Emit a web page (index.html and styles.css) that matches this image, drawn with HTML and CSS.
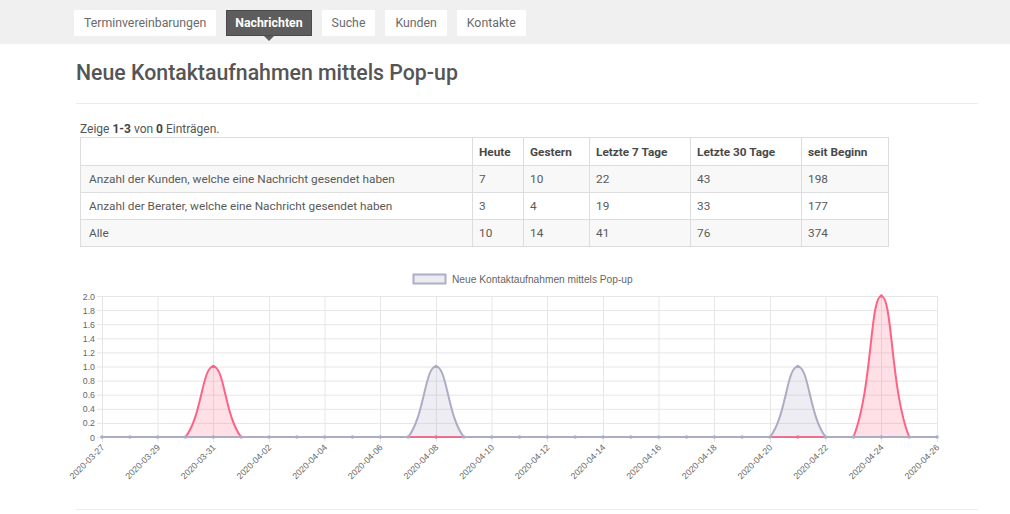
FILE: index.html
```html
<!DOCTYPE html>
<html lang="de">
<head>
<meta charset="utf-8">
<title>Neue Kontaktaufnahmen mittels Pop-up</title>
<link rel="stylesheet" href="styles.css">
</head>
<body>
<nav class="topnav">
  <ul class="tabs">
    <li class="tab">Terminvereinbarungen</li>
    <li class="tab active">Nachrichten</li>
    <li class="tab">Suche</li>
    <li class="tab">Kunden</li>
    <li class="tab">Kontakte</li>
  </ul>
</nav>
<main class="page">
  <h1 class="title">Neue Kontaktaufnahmen mittels Pop-up</h1>
  <hr class="rule">
  <div class="content">
    <div class="summary">Zeige <b>1-3</b> von <b>0</b> Einträgen.</div>
    <table class="stats">
      <colgroup>
        <col class="c1"><col class="c2"><col class="c3"><col class="c4"><col class="c5"><col class="c6">
      </colgroup>
      <thead>
        <tr><th></th><th>Heute</th><th>Gestern</th><th>Letzte 7 Tage</th><th>Letzte 30 Tage</th><th>seit Beginn</th></tr>
      </thead>
      <tbody>
        <tr><td>Anzahl der Kunden, welche eine Nachricht gesendet haben</td><td>7</td><td>10</td><td>22</td><td>43</td><td>198</td></tr>
        <tr><td>Anzahl der Berater, welche eine Nachricht gesendet haben</td><td>3</td><td>4</td><td>19</td><td>33</td><td>177</td></tr>
        <tr><td>Alle</td><td>10</td><td>14</td><td>41</td><td>76</td><td>374</td></tr>
      </tbody>
    </table>
  </div>
  <svg class="chart" width="902" height="247" viewBox="0 0 902 247" xmlns="http://www.w3.org/2000/svg">
    <g transform="translate(-76,-262)">
      <!-- legend -->
      <rect class="legbox" x="413.5" y="274.5" width="32" height="9"/>
      <text class="legtext" x="452" y="283">Neue Kontaktaufnahmen mittels Pop-up</text>

      <!-- horizontal grid -->
      <g class="grid">
        <line x1="97" y1="296.5" x2="937" y2="296.5"/>
        <line x1="97" y1="310.6" x2="937" y2="310.6"/>
        <line x1="97" y1="324.7" x2="937" y2="324.7"/>
        <line x1="97" y1="338.8" x2="937" y2="338.8"/>
        <line x1="97" y1="352.9" x2="937" y2="352.9"/>
        <line x1="97" y1="367" x2="937" y2="367"/>
        <line x1="97" y1="381.1" x2="937" y2="381.1"/>
        <line x1="97" y1="395.2" x2="937" y2="395.2"/>
        <line x1="97" y1="409.3" x2="937" y2="409.3"/>
        <line x1="97" y1="423.4" x2="937" y2="423.4"/>
        <line x1="97" y1="437.5" x2="937" y2="437.5"/>
      </g>
      <!-- vertical grid -->
      <g class="grid">
        <line x1="102.5" y1="296" x2="102.5" y2="442"/>
        <line x1="158" y1="296" x2="158" y2="442"/>
        <line x1="213.5" y1="296" x2="213.5" y2="442"/>
        <line x1="269.5" y1="296" x2="269.5" y2="442"/>
        <line x1="325" y1="296" x2="325" y2="442"/>
        <line x1="380.5" y1="296" x2="380.5" y2="442"/>
        <line x1="436.5" y1="296" x2="436.5" y2="442"/>
        <line x1="492" y1="296" x2="492" y2="442"/>
        <line x1="547.5" y1="296" x2="547.5" y2="442"/>
        <line x1="603.5" y1="296" x2="603.5" y2="442"/>
        <line x1="659" y1="296" x2="659" y2="442"/>
        <line x1="714.5" y1="296" x2="714.5" y2="442"/>
        <line x1="770.5" y1="296" x2="770.5" y2="442"/>
        <line x1="826" y1="296" x2="826" y2="442"/>
        <line x1="881.5" y1="296" x2="881.5" y2="442"/>
        <line x1="937.5" y1="296" x2="937.5" y2="442"/>
      </g>

      <!-- y labels -->
      <g class="ylab">
        <text x="95" y="299.5">2.0</text>
        <text x="95" y="313.6">1.8</text>
        <text x="95" y="327.7">1.6</text>
        <text x="95" y="341.8">1.4</text>
        <text x="95" y="355.9">1.2</text>
        <text x="95" y="370">1.0</text>
        <text x="95" y="384.1">0.8</text>
        <text x="95" y="398.2">0.6</text>
        <text x="95" y="412.3">0.4</text>
        <text x="95" y="426.4">0.2</text>
        <text x="95" y="440.5">0</text>
      </g>

      <!-- x labels -->
      <g class="xlab">
        <text transform="translate(105,448) rotate(-45)">2020-03-27</text>
        <text transform="translate(160.7,448) rotate(-45)">2020-03-29</text>
        <text transform="translate(216.3,448) rotate(-45)">2020-03-31</text>
        <text transform="translate(272,448) rotate(-45)">2020-04-02</text>
        <text transform="translate(327.7,448) rotate(-45)">2020-04-04</text>
        <text transform="translate(383.3,448) rotate(-45)">2020-04-06</text>
        <text transform="translate(439,448) rotate(-45)">2020-04-08</text>
        <text transform="translate(494.7,448) rotate(-45)">2020-04-10</text>
        <text transform="translate(550.3,448) rotate(-45)">2020-04-12</text>
        <text transform="translate(606,448) rotate(-45)">2020-04-14</text>
        <text transform="translate(661.7,448) rotate(-45)">2020-04-16</text>
        <text transform="translate(717.3,448) rotate(-45)">2020-04-18</text>
        <text transform="translate(773,448) rotate(-45)">2020-04-20</text>
        <text transform="translate(828.7,448) rotate(-45)">2020-04-22</text>
        <text transform="translate(884.3,448) rotate(-45)">2020-04-24</text>
        <text transform="translate(940,448) rotate(-45)">2020-04-26</text>
      </g>

      <!-- red series -->
      <path class="redfill" d="M185.5 437 C201.8 416.4 202.2 366.5 213.33 366.5 C224.46 366.5 224.87 416.4 241.17 437 Z"/>
      <path class="redfill" d="M853.5 437 C872.15 389.7 870.2 296 881.33 296 C892.46 296 890.52 389.7 909.17 437 Z"/>
      <path class="redline" d="M102 437 L185.5 437 C201.8 416.4 202.2 366.5 213.33 366.5 C224.46 366.5 224.87 416.4 241.17 437 L853.5 437 C872.15 389.7 870.2 296 881.33 296 C892.46 296 890.52 389.7 909.17 437 L937 437"/>
      <g class="redpt">
        <circle cx="213.33" cy="366.5" r="1.8"/>
        <circle cx="881.33" cy="296" r="1.8"/>
        <circle cx="436" cy="437" r="1.8"/>
        <circle cx="797.83" cy="437" r="1.8"/>
      </g>

      <!-- gray series -->
      <path class="grayfill" d="M408.17 437 C424.47 416.4 424.87 366.5 436 366.5 C447.13 366.5 447.53 416.4 463.83 437 Z"/>
      <path class="grayfill" d="M770 437 C786.3 416.4 786.7 366.5 797.83 366.5 C808.96 366.5 809.37 416.4 825.67 437 Z"/>
      <path class="grayline" d="M102 437 L408.17 437 C424.47 416.4 424.87 366.5 436 366.5 C447.13 366.5 447.53 416.4 463.83 437"/>
      <path class="grayline" d="M770 437 L463.83 437"/>
      <path class="grayline" d="M770 437 C786.3 416.4 786.7 366.5 797.83 366.5 C808.96 366.5 809.37 416.4 825.67 437 L853.5 437"/>
      <path class="grayline" d="M853.5 437 L937 437"/>
      <g class="graypt">
        <circle cx="102" cy="437" r="1.8"/>
        <circle cx="129.83" cy="437" r="1.8"/>
        <circle cx="157.67" cy="437" r="1.8"/>
        <circle cx="185.5" cy="437" r="1.8"/>
        <circle cx="213.33" cy="437" r="1.8"/>
        <circle cx="241.17" cy="437" r="1.8"/>
        <circle cx="269" cy="437" r="1.8"/>
        <circle cx="296.83" cy="437" r="1.8"/>
        <circle cx="324.67" cy="437" r="1.8"/>
        <circle cx="352.5" cy="437" r="1.8"/>
        <circle cx="380.33" cy="437" r="1.8"/>
        <circle cx="408.17" cy="437" r="1.8"/>
        <circle cx="436" cy="366.5" r="1.8"/>
        <circle cx="463.83" cy="437" r="1.8"/>
        <circle cx="491.67" cy="437" r="1.8"/>
        <circle cx="519.5" cy="437" r="1.8"/>
        <circle cx="547.33" cy="437" r="1.8"/>
        <circle cx="575.17" cy="437" r="1.8"/>
        <circle cx="603" cy="437" r="1.8"/>
        <circle cx="630.83" cy="437" r="1.8"/>
        <circle cx="658.67" cy="437" r="1.8"/>
        <circle cx="686.5" cy="437" r="1.8"/>
        <circle cx="714.33" cy="437" r="1.8"/>
        <circle cx="742.17" cy="437" r="1.8"/>
        <circle cx="770" cy="437" r="1.8"/>
        <circle cx="797.83" cy="366.5" r="1.8"/>
        <circle cx="825.67" cy="437" r="1.8"/>
        <circle cx="853.5" cy="437" r="1.8"/>
        <circle cx="881.33" cy="437" r="1.8"/>
        <circle cx="909.17" cy="437" r="1.8"/>
        <circle cx="937" cy="437" r="1.8"/>
      </g>
    </g>
  </svg>
  <hr class="rule bottom">
</main>
</body>
</html>
```
FILE: styles.css
```css
html, body {
  margin: 0;
  padding: 0;
  background: #ffffff;
}
body {
  font-family: Roboto, "Liberation Sans", Arial, sans-serif;
  color: #555555;
}
.topnav {
  background: #f0f0f0;
  height: 44px;
  box-sizing: border-box;
  padding-top: 10px;
}
.tabs {
  list-style: none;
  margin: 0 0 0 74px;
  padding: 0;
  display: flex;
  gap: 10px;
}
.tab {
  position: relative;
  height: 26px;
  box-sizing: border-box;
  background: #ffffff;
  color: #6a6a6a;
  font-size: 12.3px;
  line-height: 26px;
  padding: 0 10px;
}
.tab.active {
  background: #5d5d5d;
  border: 1px solid #4a4a4a;
  line-height: 24px;
  color: #ffffff;
  font-weight: 700;
  padding: 0 8px;
}
.tab.active::after {
  content: "";
  position: absolute;
  left: 50%;
  bottom: -6px;
  margin-left: -5px;
  border-left: 5px solid transparent;
  border-right: 5px solid transparent;
  border-top: 5px solid #5d5d5d;
}
.page {
  margin-left: 76px;
  width: 902px;
}
.title {
  margin: 17px 0 0 0;
  font-size: 21.3px;
  line-height: 24px;
  font-weight: 500;
  color: #555555;
}
.rule {
  margin: 18px 0 0 0;
  border: 0;
  border-top: 1px solid #ebebeb;
  height: 0;
}
.rule.bottom {
  margin-top: 0;
}
.content {
  padding-left: 4px;
}
.summary {
  margin-top: 18px;
  font-size: 12px;
  line-height: 14px;
  color: #555555;
}
.summary b {
  font-weight: 700;
  color: #444444;
}
.stats {
  margin-top: 1px;
  border-collapse: collapse;
  table-layout: fixed;
  width: 808px;
  font-size: 11.8px;
  color: #5a5a5a;
}
.c1 { width: 392px; }
.c2 { width: 51px; }
.c3 { width: 66px; }
.c4 { width: 101px; }
.c5 { width: 111px; }
.c6 { width: 87px; }
.stats th,
.stats td {
  border: 1px solid #dddddd;
  padding: 0 6px;
  height: 26px;
  text-align: left;
  white-space: nowrap;
}
.stats th {
  font-weight: 700;
  color: #484848;
  height: 27px;
}
.stats td:first-child {
  padding-left: 8px;
}
.stats tbody tr:nth-child(odd) {
  background: #f8f8f8;
}
.chart {
  display: block;
  margin-top: 15px;
  overflow: visible;
}
.chart text {
  font-family: "Liberation Sans", Arial, sans-serif;
  fill: #666666;
}
.legbox {
  fill: #ebebf2;
  stroke: #aeaec6;
  stroke-width: 2;
}
.legtext {
  font-size: 10.2px;
}
.grid line {
  stroke: #e6e6e6;
  stroke-width: 1;
}
.ylab text {
  font-size: 8.8px;
  text-anchor: end;
}
.xlab text {
  font-size: 8.8px;
  text-anchor: end;
}
.redfill {
  fill: rgba(255, 99, 132, 0.2);
}
.redline {
  fill: none;
  stroke: #ff6384;
  stroke-width: 2;
}
.redpt circle {
  fill: #ff6384;
}
.grayfill {
  fill: rgba(175, 175, 200, 0.22);
}
.grayline {
  fill: none;
  stroke: #acacc4;
  stroke-width: 2;
}
.graypt circle {
  fill: #acacc4;
}
```
